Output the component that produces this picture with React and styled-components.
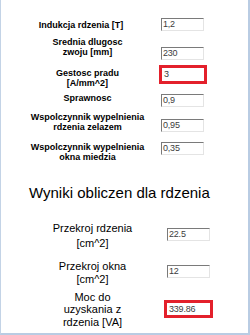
import React from 'react'
import styled, { createGlobalStyle } from 'styled-components'

const Global = createGlobalStyle`
  html, body {
    margin: 0;
    padding: 0;
    background: #ffffff;
  }
  * {
    box-sizing: border-box;
  }
`

const Frame = styled.div`
  width: 250px;
  height: 335px;
  background: #ffffff;
  border-left: 1px solid #c3d3e6;
  border-right: 2px solid #b9cce3;
  border-bottom: 2px solid #b9cce3;
  font-family: 'Liberation Sans', Arial, sans-serif;
  color: #000000;
  overflow: hidden;
  padding-top: ${(p) => p.top}px;
`

const Section = styled.div`
  display: flex;
  flex-direction: column;
  padding-left: ${(p) => p.left}px;
`

const Row = styled.div`
  display: flex;
  align-items: flex-start;
  margin-top: ${(p) => p.gap || 0}px;
  gap: ${(p) => p.colGap}px;
`

const Label = styled.div`
  width: 125px;
  flex-shrink: 0;
  text-align: center;
  font-size: ${(p) => (p.big ? 11 : 9)}px;
  font-weight: ${(p) => (p.big ? 400 : 700)};
  line-height: ${(p) => p.lh || 10}px;
  padding-top: ${(p) => p.pt || 0}px;
  padding-right: ${(p) => p.pr || 0}px;
  white-space: nowrap;
`

const Field = styled.div`
  width: 43px;
  height: 13px;
  margin-top: ${(p) => p.mt || 0}px;
  border-top: 1px solid #7a7a7a;
  border-left: 1px solid #7a7a7a;
  border-right: 1px solid #e4e4e4;
  border-bottom: 1px solid #e4e4e4;
  background: #ffffff;
  font-size: 9px;
  line-height: 11px;
  padding-left: 1px;
  color: #3c3c3c;
  letter-spacing: -0.2px;
`

const Marked = styled.div`
  width: ${(p) => p.w}px;
  height: ${(p) => p.h}px;
  margin-top: ${(p) => p.mt || 0}px;
  margin-left: ${(p) => p.ml || 0}px;
  border: 3px solid #e3202b;
  background: #ffffff;
  font-size: 9px;
  line-height: ${(p) => p.h - 6}px;
  padding-left: 2px;
  color: #3c3c3c;
  letter-spacing: -0.2px;
`

const Heading = styled.div`
  margin-top: 22px;
  padding-left: 28px;
  font-size: 15px;
  line-height: 17px;
  white-space: nowrap;
`

const inputs = [
  { label: ['Indukcja rdzenia [T]'], value: '1,2', gap: 0, pt: 1, pr: 13, mt: -1 },
  { label: ['Srednia dlugosc', 'zwoju [mm]'], value: '230', gap: 6, mt: 10 },
  { label: ['Gestosc pradu', '[A/mm^2]'], value: '3', gap: 5, pt: 3, marked: true },
  { label: ['Sprawnosc'], value: '0,9', gap: 5, mt: 1 },
  { label: ['Wspolczynnik wypelnienia', 'rdzenia zelazem'], value: '0,95', gap: 5, mt: 7 },
  { label: ['Wspolczynnik wypelnienia', 'okna miedzia'], value: '0,35', gap: 10, mt: 0 },
]

const results = [
  { label: ['Przekroj rdzenia', '[cm^2]'], value: '22.5', gap: 20, lh: 15, mt: 7 },
  { label: ['Przekroj okna', '[cm^2]'], value: '12', gap: 9, lh: 13, mt: 5 },
  { label: ['Moc do', 'uzyskania z', 'rdzenia [VA]'], value: '339.86', gap: 5, lh: 12.3, mt: 9, marked: true },
]

const Lines = ({ lines }) =>
  lines.map((l, i) => (
    <React.Fragment key={i}>
      {l}
      {i < lines.length - 1 && <br />}
    </React.Fragment>
  ))

export default function App() {
  return (
    <>
      <Global />
      <Frame top={19}>
        <Section left={24}>
          {inputs.map((r, i) => (
            <Row key={i} gap={r.gap} colGap={11}>
              <Label pt={r.pt} pr={r.pr}>
                <Lines lines={r.label} />
              </Label>
              {r.marked ? (
                <Marked w={48} h={19} ml={-2}>
                  {r.value}
                </Marked>
              ) : (
                <Field mt={r.mt}>{r.value}</Field>
              )}
            </Row>
          ))}
        </Section>
        <Heading>Wyniki obliczen dla rdzenia</Heading>
        <Section left={29}>
          {results.map((r, i) => (
            <Row key={i} gap={r.gap} colGap={12}>
              <Label big lh={r.lh}>
                <Lines lines={r.label} />
              </Label>
              {r.marked ? (
                <Marked w={49} h={18} mt={r.mt} ml={-3}>
                  {r.value}
                </Marked>
              ) : (
                <Field mt={r.mt}>{r.value}</Field>
              )}
            </Row>
          ))}
        </Section>
      </Frame>
    </>
  )
}
